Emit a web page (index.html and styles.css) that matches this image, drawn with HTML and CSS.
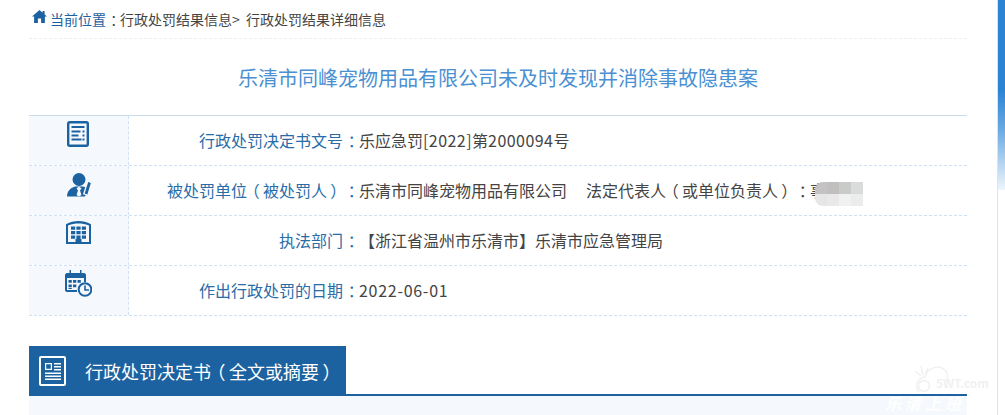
FILE: index.html
```html
<!DOCTYPE html>
<html lang="zh-CN">
<head>
<meta charset="utf-8">
<title>行政处罚结果详细信息</title>
<link rel="stylesheet" href="styles.css">
</head>
<body>
<div class="page">
  <main class="content">
    <nav class="crumbs">
      <svg class="home" viewBox="0 0 15 13" width="15" height="13"><path d="M7.500 0 0 6.600h2.100V13h3.800V8.600h3.200V13h3.800V6.600H15L12.600 4.500V1h-2v1.700z"/></svg>
      <span class="crumb-here">当前位置</span><span><span class="colon">：</span>行政处罚结果信息&gt;&nbsp;&nbsp;行政处罚结果详细信息</span>
    </nav>
    <h1 class="title">乐清市同峰宠物用品有限公司未及时发现并消除事故隐患案</h1>
    <section class="facts">
      <div class="row">
        <div class="row-icon">
          <svg viewBox="0 0 22 26" width="22" height="26"><rect x="1.200" y="1.200" width="19.600" height="23.600" rx="1.500" fill="none" stroke="#1d62a0" stroke-width="2.400"/><path d="M4.500 5h13v2h-13zM4.500 9.500h9v2h-9zM15.500 9.500h2v2h-2zM4.500 13.500h7v2h-7zM15.500 13.500h2v2h-2zM4.500 17.500h10v2h-10zM15.500 17.500h2v2h-2z" fill="#1d62a0"/></svg>
        </div>
        <div class="row-label">行政处罚决定书文号<span class="colon">：</span></div>
        <div class="row-value">乐应急罚<span class="num">[2022]</span>第<span class="num">2000094</span>号</div>
      </div>
      <div class="row">
        <div class="row-icon">
          <svg viewBox="0 0 25 26" width="25" height="26"><circle cx="13" cy="8.500" r="6.500" fill="#1d62a0"/><path d="M1 25.500c0-5 3-8.500 8-10h8c2 .5 4 1.500 5 3l-3 7z" fill="#1d62a0"/><path d="M13 15.500l-2.500 2 1.500 2-1.500 4.500 2.500 1.500 2.500-1.500-1.500-4.500 1.500-2z" fill="#f5f9fe"/><path d="M23.500 12 19.500 24" stroke="#f5f9fe" stroke-width="5.500" fill="none"/><path d="M23.500 11.500 20 23" stroke="#1d62a0" stroke-width="2.800" fill="none"/></svg>
        </div>
        <div class="row-label">被处罚单位<span class="open">（</span>被处罚人<span class="close">）</span><span class="colon">：</span></div>
        <div class="row-value">乐清市同峰宠物用品有限公司<span class="rep">法定代表人<span class="open">（</span>或单位负责人<span class="close">）</span><span class="colon">：</span>事</span></div>
        <div class="blur">
          <i class="b1"></i><i class="b2"></i><i class="b3"></i><i class="b4"></i>
          <i class="b5"></i><i class="b6"></i><i class="b7"></i><i class="b8"></i>
        </div>
      </div>
      <div class="row">
        <div class="row-icon">
          <svg viewBox="0 0 25 23" width="25" height="23"><path fill-rule="evenodd" fill="#1d62a0" d="M0 23V3.200C4 1 8 0 12.500 0S21 1 25 3.200V23zM2 4.500V21h7.500v-3h6v3H23V4.500C19 3 16 2.500 12.500 2.500S6 3 2 4.500z"/><path fill="#1d62a0" d="M5 5.500h4.200v3.200H5zM10.400 5.500h4.200v3.200h-4.200zM15.800 5.500H20v3.200h-4.200zM5 10h4.200v3.200H5zM10.400 10h4.200v3.200h-4.200zM15.800 10H20v3.200h-4.200zM5 14.500h4.200v3.200H5zM10.400 14.500h4.200V18h-4.200zM15.800 14.500H20v3.200h-4.200z"/></svg>
        </div>
        <div class="row-label">执法部门<span class="colon">：</span></div>
        <div class="row-value">【浙江省温州市乐清市】乐清市应急管理局</div>
      </div>
      <div class="row">
        <div class="row-icon row-icon-high">
          <svg viewBox="0 0 27 27" width="27" height="27"><path fill="#1d62a0" d="M2 3h2.500V0H6v3h9V0h1.500v3H19c1 0 2 1 2 2v7h-2V8H2v12h10v2H2c-1 0-2-1-2-2V5c0-1 1-2 2-2z"/><path fill="#1d62a0" d="M3.500 10h3.300v2.800H3.500zM8 10h3.300v2.800H8zM12.500 10h3.300v2.800h-3.300zM3.500 14.500h3.300v2.800H3.500zM8 14.500h3.300v2.800H8zM3.500 18h3.300v1H3.500z"/><circle cx="20" cy="19.500" r="6.300" fill="#f5f9fe" stroke="#1d62a0" stroke-width="2"/><path d="M20 15.500V20h4" fill="none" stroke="#1d62a0" stroke-width="1.600"/></svg>
        </div>
        <div class="row-label">作出行政处罚的日期<span class="colon">：</span></div>
        <div class="row-value"><span class="date">2022-06-01</span></div>
      </div>
    </section>
    <section class="decision">
      <header class="decision-head">
        <h2 class="decision-tab">
          <svg viewBox="0 0 27 30" width="27" height="30"><rect x="1" y="1" width="25" height="28" rx="1" fill="none" stroke="#fff" stroke-width="2"/><path d="M6 7h7v7H6zM7.200 8.200v4.600h4.600V8.200zM15 7h7v1.400h-7zM15 10h7v1.400h-7zM15 13h7v1.400h-7zM6 16.500h16v1.400H6zM6 19.500h16v1.400H6zM6 22.500h16v1.400H6z" fill="#fff" fill-rule="evenodd"/></svg>
          <span>行政处罚决定书<span class="open">（</span>全文或摘要<span class="close">）</span></span>
        </h2>
      </header>
      <div class="decision-body"></div>
      <div class="mark" aria-hidden="true">
        <div class="mark-top">
          <svg class="mark-logo" viewBox="0 0 38 28" width="38" height="28"><g fill="none" stroke="#f1f1f1" stroke-width="1.500"><path d="M3 6l6 5M9 1l2 9M16 3l-3 8M7 27c-5-5-2-14 6-15 2-9 14-13 20-7 3 3 3 9 1 12"/><circle cx="12" cy="21" r="5.500"/></g></svg>
          <span class="mark-site">5WT.com</span>
        </div>
        <div class="mark-text">乐清上班族</div>
      </div>
    </section>
  </main>
  <aside class="scrollbar"><div class="thumb"></div></aside>
</div>
</body>
</html>
```
FILE: styles.css
```css
* { box-sizing: border-box; }
html, body { margin: 0; padding: 0; height: 415px; overflow: hidden; background: #fff; }
body { font-family: "Noto Sans CJK SC", "Liberation Sans", sans-serif; color: #444; }
.page { display: flex; height: 415px; overflow: hidden; }
.content { flex: 0 0 997px; padding: 0 30px 0 29px; }
.scrollbar { flex: 1; border-left: 1px solid #e2e2e2; }
.thumb { height: 190px; background: linear-gradient(#2b83d6 0, #2b83d6 90px, #6aaae2 130px, #eef6fd 190px); }

.colon, .open, .close { font-feature-settings: "halt"; text-spacing-trim: space-all; }
.colon { padding: 0 .2em 0 .3em; }
.open { padding: 0 .2em 0 .3em; }
.close { padding: 0 .3em 0 .2em; }
.num { letter-spacing: .45px; }
.date { letter-spacing: .72px; }

.crumbs { height: 39px; padding: 9px 0 0 3px; display: flex; align-items: flex-start; font-size: 14px; line-height: 20px; color: #444; border-bottom: 1px dashed #eee; white-space: nowrap; }
.home { fill: #1d62a0; margin: 1px 3px 0 0; flex: none; }
.crumb-here { color: #1d62a0; }

.title { margin: 0; height: 76px; padding-top: 25px; font-size: 20px; line-height: 28px; font-weight: 400; text-align: center; color: #4a90d2; white-space: nowrap; }

.facts { border-top: 1px solid #c9dcec; }
.row { position: relative; display: flex; height: 50px; border-bottom: 1px dashed #cfe2f5; font-size: 16px; line-height: 49px; white-space: nowrap; }
.row-icon { flex: 0 0 100px; display: flex; justify-content: center; align-items: flex-start; padding: 5px 1px 0 0; background: #f5f9fe; border-right: 1px dashed #cfe2f5; }
.row-icon-high { padding-top: 4px; }
.row-icon svg { display: block; }
.row-label { flex: 0 0 230px; text-align: right; color: #2a6ca8; }
.row-value { flex: 1; color: #444; overflow: hidden; }
.rep { margin-left: 19px; }

.blur { position: absolute; left: 786px; top: 16px; width: 48px; height: 24px; display: grid; grid-template-columns: repeat(4, 12px); grid-template-rows: repeat(2, 12px); border-radius: 8px 0 0 8px; overflow: hidden; }
.b1 { background: #c4c2c2; } .b2 { background: #c0bebe; } .b3 { background: #c9cbc9; } .b4 { background: #dadcdc; }
.b5 { background: #e6e6e6; } .b6 { background: #e9e9e9; } .b7 { background: #f0f1f2; } .b8 { background: #ececec; }

.decision { position: relative; margin-top: 30px; }
.decision-head { height: 50px; border-bottom: 2px solid #1d62a0; }
.decision-tab { margin: 0; width: 317px; height: 50px; padding-left: 10px; display: flex; align-items: center; gap: 19px; background: #1d62a0; color: #fff; font-size: 18px; font-weight: 400; white-space: nowrap; }
.decision-tab svg { flex: none; }
.decision-body { height: 60px; background: #f5f8fd; }

.mark { position: absolute; left: 856px; top: 16px; width: 82px; }
.mark-top { display: flex; align-items: flex-end; height: 31px; margin-left: 27px; white-space: nowrap; }
.mark-logo { display: block; flex: none; }
.mark-site { margin: 0 0 3px -14px; font-size: 12px; line-height: 14px; font-weight: 700; color: #f1f1f1; }
.mark-text { font-size: 16px; line-height: 20px; letter-spacing: 4px; font-weight: 700; font-style: italic; color: #fff; white-space: nowrap; }
```
